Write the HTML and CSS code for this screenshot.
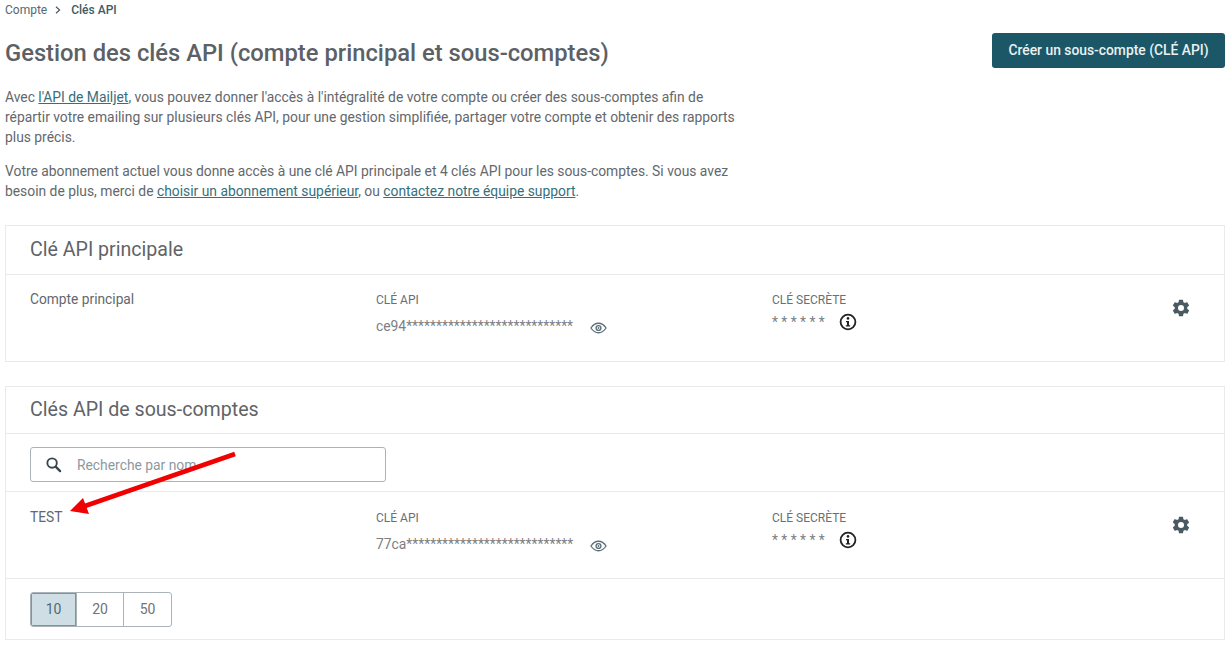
FILE: index.html
```html
<!DOCTYPE html>
<html lang="fr">
  <head>
    <meta charset="UTF-8" />
    <meta name="viewport" content="width=device-width, initial-scale=1.0" />
    <title>Clés API</title>
    <link rel="stylesheet" href="styles.css">
  </head>
  <body>
    <div class="page">
      <div class="breadcrumb">
        <span>Compte</span>
        <svg class="breadcrumb-sep" viewBox="0 0 6 8"><path d="M1 .8L4.600 4L1 7.200" fill="none" stroke="#4a5a62" stroke-width="1.200"/></svg>
        <span class="breadcrumb-current">Clés API</span>
      </div>

      <div class="title-row">
        <h1>Gestion des clés API (compte principal et sous-comptes)</h1>
        <button class="button">Créer un sous-compte (CLÉ API)</button>
      </div>

      <div class="intro">
        <p>Avec <a href="#">l'API de Mailjet</a>, vous pouvez donner l'accès à l'intégralité de votre compte ou créer des sous-comptes afin de répartir votre emailing sur plusieurs clés API, pour une gestion simplifiée, partager votre compte et obtenir des rapports plus précis.</p>
        <p>Votre abonnement actuel vous donne accès à une clé API principale et 4 clés API pour les sous-comptes. Si vous avez besoin de plus, merci de <a href="#">choisir un abonnement supérieur</a>, ou <a href="#">contactez notre équipe support</a>.</p>
      </div>

      <section class="panel panel-main">
        <h2>Clé API principale</h2>
        <div class="key-row">
          <div class="key-name">Compte principal</div>
          <div class="key-col">
            <div class="key-label">CLÉ API</div>
            <div class="key-value">
              <span class="key-text">ce94****************************</span>
              <svg class="icon-eye" viewBox="0 0 18 12"><path d="M1 6c2-3 5-5 8-5s6 2 8 5c-2 3-5 5-8 5S3 9 1 6z" fill="none" stroke="#5c6f78" stroke-width="1.4"/><circle cx="9" cy="6" r="2.6" fill="none" stroke="#5c6f78" stroke-width="1.4"/><circle cx="9" cy="6" r="1" fill="#5c6f78"/></svg>
            </div>
          </div>
          <div class="key-col">
            <div class="key-label">CLÉ SECRÈTE</div>
            <div class="key-value secret">
              <span class="stars">******</span>
              <svg class="icon-info" viewBox="0 0 18 18"><circle cx="9" cy="9" r="7.4" fill="none" stroke="#222" stroke-width="1.8"/><circle cx="9" cy="5.4" r="1.3" fill="#222"/><path d="M7 8h3v4.2h1.2v1.3H6.800v-1.300H8V9.300H7z" fill="#222"/></svg>
            </div>
          </div>
          <svg class="icon-gear" viewBox="0 0 24 24"><path fill="#4a5a62" d="M19.400 13c.05-.32.07-.66.07-1s-.02-.68-.07-1l2.100-1.650c.2-.15.25-.42.12-.64l-2-3.460c-.12-.22-.39-.3-.61-.22l-2.490 1c-.52-.4-1.080-.73-1.690-.98l-.38-2.650A.49.49 0 0 0 14 2h-4c-.25 0-.46.18-.49.420l-.38 2.650c-.61.25-1.170.59-1.690.98l-2.490-1c-.23-.09-.49 0-.61.22l-2 3.460c-.13.22-.07.49.12.64L4.570 11c-.05.32-.07.66-.07 1s.02.68.07 1l-2.110 1.650c-.19.15-.24.42-.12.64l2 3.460c.12.22.39.3.61.22l2.490-1c.52.4 1.080.73 1.690.98l.38 2.650c.03.24.24.42.49.420h4c.25 0 .46-.18.49-.42l.38-2.650c.61-.25 1.170-.59 1.690-.98l2.490 1c.23.09.49 0 .61-.22l2-3.460c.12-.22.07-.49-.12-.64zM12 15.600a3.600 3.600 0 1 1 0-7.200 3.600 3.600 0 0 1 0 7.200z"/></svg>
        </div>
      </section>

      <section class="panel panel-sub">
        <h2>Clés API de sous-comptes</h2>
        <div class="search-row">
          <div class="search">
            <svg class="icon-search" viewBox="0 0 18 18"><circle cx="7.500" cy="7.500" r="5" fill="none" stroke="#37474f" stroke-width="2"/><path d="M11.500 11.500L16 16" stroke="#37474f" stroke-width="2.400" stroke-linecap="round"/></svg>
            <span>Recherche par nom</span>
          </div>
        </div>
        <div class="key-row">
          <div class="key-name">TEST</div>
          <div class="key-col">
            <div class="key-label">CLÉ API</div>
            <div class="key-value">
              <span class="key-text">77ca****************************</span>
              <svg class="icon-eye" viewBox="0 0 18 12"><path d="M1 6c2-3 5-5 8-5s6 2 8 5c-2 3-5 5-8 5S3 9 1 6z" fill="none" stroke="#5c6f78" stroke-width="1.4"/><circle cx="9" cy="6" r="2.6" fill="none" stroke="#5c6f78" stroke-width="1.4"/><circle cx="9" cy="6" r="1" fill="#5c6f78"/></svg>
            </div>
          </div>
          <div class="key-col">
            <div class="key-label">CLÉ SECRÈTE</div>
            <div class="key-value secret">
              <span class="stars">******</span>
              <svg class="icon-info" viewBox="0 0 18 18"><circle cx="9" cy="9" r="7.4" fill="none" stroke="#222" stroke-width="1.8"/><circle cx="9" cy="5.4" r="1.3" fill="#222"/><path d="M7 8h3v4.2h1.2v1.3H6.800v-1.300H8V9.300H7z" fill="#222"/></svg>
            </div>
          </div>
          <svg class="icon-gear" viewBox="0 0 24 24"><path fill="#4a5a62" d="M19.400 13c.05-.32.07-.66.07-1s-.02-.68-.07-1l2.100-1.650c.2-.15.25-.42.12-.64l-2-3.460c-.12-.22-.39-.3-.61-.22l-2.490 1c-.52-.4-1.080-.73-1.690-.98l-.38-2.650A.49.49 0 0 0 14 2h-4c-.25 0-.46.18-.49.420l-.38 2.650c-.61.25-1.170.59-1.690.98l-2.490-1c-.23-.09-.49 0-.61-.22l-2 3.460c-.13.22-.07.49.12.64L4.570 11c-.05.32-.07.66-.07 1s.02.68.07 1l-2.110 1.650c-.19.15-.24.42-.12.64l2 3.460c.12.22.39.3.61.22l2.490-1c.52.4 1.080.73 1.690.98l.38 2.650c.03.24.24.42.49.420h4c.25 0 .46-.18.49-.42l.38-2.650c.61-.25 1.170-.59 1.690-.98l2.490 1c.23.09.49 0 .61-.22l2-3.460c.12-.22.07-.49-.12-.64zM12 15.600a3.600 3.600 0 1 1 0-7.200 3.600 3.600 0 0 1 0 7.200z"/></svg>
        </div>
        <div class="pager-row">
          <div class="pager">
            <span class="pager-item active">10</span>
            <span class="pager-item">20</span>
            <span class="pager-item">50</span>
          </div>
        </div>
      </section>

      <!-- annotation drawn over the screenshot -->
      <svg class="arrow" viewBox="0 0 175 75"><path d="M170 9L20 61" stroke="#f00000" stroke-width="4.500" fill="none"/><path d="M5 66L18 53L24 69z" fill="#f00000"/></svg>
    </div>
  </body>
</html>
```

FILE: styles.css
```css
* {
  box-sizing: border-box;
}

body {
  margin: 0;
  background-color: #fff;
  font-family: Roboto, Arial, sans-serif;
  color: #63686c;
}

.page {
  position: relative;
  height: 645px;
  overflow: hidden;
  padding: 2px 6px 0 5px;
}

.breadcrumb {
  display: flex;
  align-items: center;
  height: 14px;
  font-size: 12px;
  line-height: 14px;
  color: #4f6a75;
  transform: translateY(1px);
}

.breadcrumb-sep {
  width: 6px;
  height: 8px;
  margin: 0 10px 0 8px;
}

.breadcrumb-current {
  color: #3c5c66;
  font-weight: 500;
}

.title-row {
  display: flex;
  justify-content: space-between;
  align-items: flex-start;
  margin-top: 17px;
}

h1 {
  margin: 6px 0 0;
  font-size: 23.750px;
  line-height: 28px;
  font-weight: 500;
  color: #5c6165;
}

.button {
  width: 233px;
  height: 35px;
  padding: 0 0 2px;
  border: none;
  border-radius: 3px;
  background-color: #1b5767;
  color: #e9f1f3;
  font-family: Roboto, Arial, sans-serif;
  font-size: 13.850px;
  font-weight: 500;
}

.intro {
  width: 745px;
  margin-top: 19px;
  font-size: 13.850px;
  line-height: 20px;
}

.intro p {
  margin: 0 0 14px;
}

.intro a {
  color: #35707c;
  text-decoration: underline;
}

.panel {
  border: 1px solid #e8eaeb;
  background-color: #fff;
}

.panel-main {
  margin-top: 24px;
  height: 137px;
}

.panel-sub {
  margin-top: 24px;
  height: 254px;
}

h2 {
  margin: 0;
  padding: 0 24px;
  font-size: 19.600px;
  font-weight: 400;
  color: #5f6468;
  border-bottom: 1px solid #e8eaeb;
}

.panel-main h2 {
  height: 49px;
  line-height: 47px;
}

.panel-sub h2 {
  height: 47px;
  line-height: 45px;
}

.key-row {
  position: relative;
  display: grid;
  grid-template-columns: 346px 396px 1fr;
  height: 87px;
  padding: 15px 24px 0;
  border-bottom: 1px solid #e8eaeb;
}

.panel-main .key-row {
  border-bottom: none;
}

.key-name {
  font-size: 13.750px;
  line-height: 18px;
}

.panel-sub .key-col,
.panel-sub .key-name {
  transform: translateY(1px);
}

.key-label {
  font-size: 12px;
  line-height: 20px;
  color: #6b6f72;
}

.key-value {
  display: flex;
  align-items: center;
  font-size: 13.850px;
  height: 20px;
  margin-top: 6px;
  color: #7c8083;
}

.key-text {
  width: 214px;
  white-space: nowrap;
}

.icon-eye {
  width: 17px;
  height: 12px;
  margin-top: 3px;
}

.key-value.secret {
  margin-top: 2px;
}

.stars {
  width: 69px;
  font-size: 13.850px;
  letter-spacing: 3.400px;
  white-space: nowrap;
  margin-right: -2px;
}

.icon-info {
  width: 18px;
  height: 18px;
}

.icon-gear {
  position: absolute;
  top: 23px;
  left: 1165px;
  width: 20px;
  height: 20px;
}

.search-row {
  height: 58px;
  padding: 13px 24px 0;
  border-bottom: 1px solid #e8eaeb;
}

.search {
  display: flex;
  align-items: center;
  width: 356px;
  height: 35px;
  padding-left: 14px;
  gap: 15px;
  border: 1px solid #aab4b8;
  border-radius: 3px;
  font-size: 13.850px;
  color: #8d999f;
}

.icon-search {
  width: 17px;
  height: 17px;
}

.pager-row {
  padding: 13px 24px 0;
}

.pager {
  display: inline-flex;
  height: 35px;
  border: 1px solid #aab4b8;
  border-radius: 3px;
  overflow: hidden;
}

.pager-item {
  width: 47px;
  font-size: 14px;
  line-height: 33px;
  text-align: center;
  color: #6f7477;
  border-left: 1px solid #aab4b8;
}

.pager-item:first-child {
  width: 45px;
  border-left: none;
}

.pager-item:last-child {
  width: 48px;
}

.pager-item.active {
  background-color: #cfdde4;
  color: #4f6a75;
  box-shadow: inset 0 0 0 1px #6f9aa3;
}

.arrow {
  position: absolute;
  left: 65px;
  top: 445px;
  width: 175px;
  height: 75px;
}
```
